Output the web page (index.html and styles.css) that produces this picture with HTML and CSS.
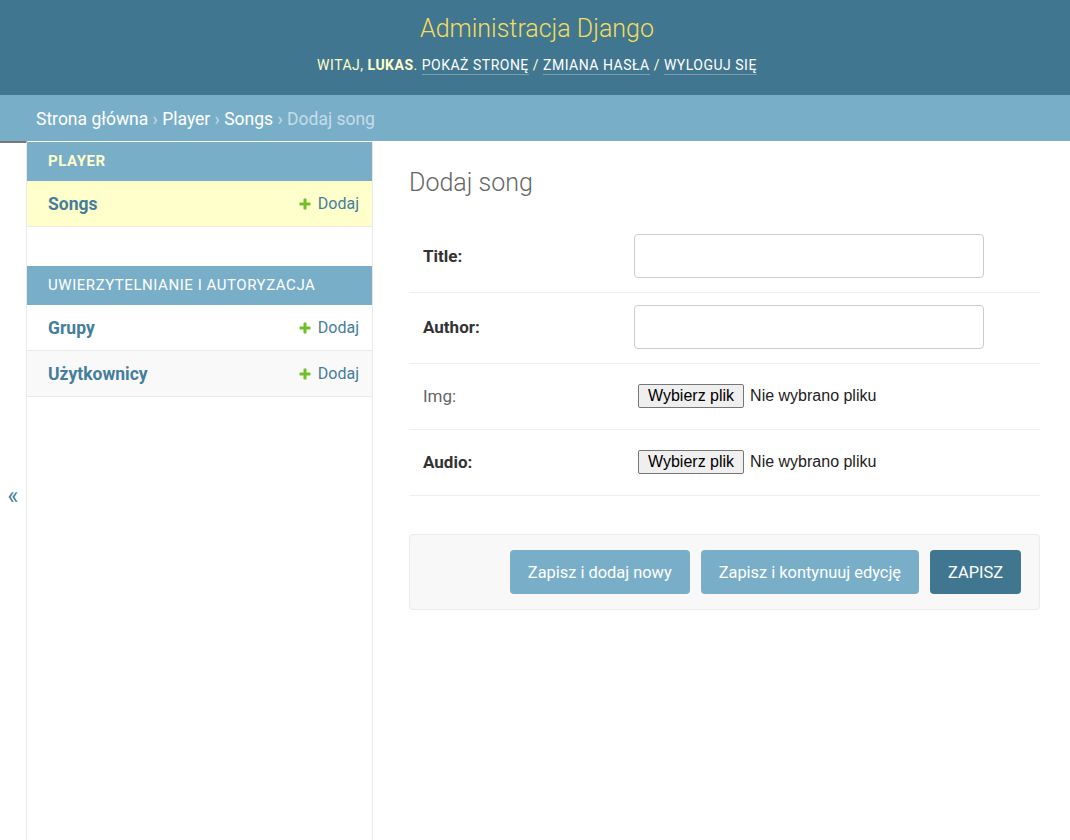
FILE: index.html
```html
<!DOCTYPE html>
<html lang="pl">
<head>
<meta charset="utf-8">
<title>Dodaj song | Administracja Django</title>
<link rel="stylesheet" href="styles.css">
</head>
<body>
<header class="header">
  <div class="brand">Administracja Django</div>
  <div class="user-tools">Witaj, <strong>lukas</strong>. <a href="#">Pokaż stronę</a> / <a href="#">Zmiana hasła</a> / <a href="#">Wyloguj się</a></div>
</header>
<nav class="breadcrumbs"><a href="#">Strona główna</a> › <a href="#">Player</a> › <a href="#">Songs</a> › Dodaj song</nav>
<div class="layout">
  <div class="toggle"><span>«</span></div>
  <aside class="sidebar">
    <div class="module">
      <div class="caption current">Player</div>
      <div class="row current-model"><a class="model" href="#">Songs</a><a class="add" href="#"><svg viewBox="0 0 1792 1792" width="14" height="14"><path fill="#70bf2b" d="M1600 796v192q0 40-28 68t-68 28h-416v416q0 40-28 68t-68 28h-192q-40 0-68-28t-28-68v-416h-416q-40 0-68-28t-28-68v-192q0-40 28-68t68-28h416v-416q0-40 28-68t68-28h192q40 0 68 28t28 68v416h416q40 0 68 28t28 68z"/></svg>Dodaj</a></div>
    </div>
    <div class="module">
      <div class="caption">Uwierzytelnianie i autoryzacja</div>
      <div class="row"><a class="model" href="#">Grupy</a><a class="add" href="#"><svg viewBox="0 0 1792 1792" width="14" height="14"><path fill="#70bf2b" d="M1600 796v192q0 40-28 68t-68 28h-416v416q0 40-28 68t-68 28h-192q-40 0-68-28t-28-68v-416h-416q-40 0-68-28t-28-68v-192q0-40 28-68t68-28h416v-416q0-40 28-68t68-28h192q40 0 68 28t28 68v416h416q40 0 68 28t28 68z"/></svg>Dodaj</a></div>
      <div class="row alt"><a class="model" href="#">Użytkownicy</a><a class="add" href="#"><svg viewBox="0 0 1792 1792" width="14" height="14"><path fill="#70bf2b" d="M1600 796v192q0 40-28 68t-68 28h-416v416q0 40-28 68t-68 28h-192q-40 0-68-28t-28-68v-416h-416q-40 0-68-28t-28-68v-192q0-40 28-68t68-28h416v-416q0-40 28-68t68-28h192q40 0 68 28t28 68v416h416q40 0 68 28t28 68z"/></svg>Dodaj</a></div>
    </div>
  </aside>
  <main class="content">
    <h1>Dodaj song</h1>
    <form class="form">
      <div class="form-row">
        <label class="required">Title:</label>
        <input class="text" type="text">
      </div>
      <div class="form-row">
        <label class="required">Author:</label>
        <input class="text" type="text">
      </div>
      <div class="form-row file-row">
        <label>Img:</label>
        <div class="file"><span class="file-btn">Wybierz plik</span><span class="file-name">Nie wybrano pliku</span></div>
      </div>
      <div class="form-row file-row">
        <label class="required">Audio:</label>
        <div class="file"><span class="file-btn">Wybierz plik</span><span class="file-name">Nie wybrano pliku</span></div>
      </div>
      <div class="submit-row">
        <button type="button" class="btn">Zapisz i dodaj nowy</button>
        <button type="button" class="btn">Zapisz i kontynuuj edycję</button>
        <button type="button" class="btn default">ZAPISZ</button>
      </div>
    </form>
  </main>
</div>
</body>
</html>
```
FILE: styles.css
```css
html, body {
  margin: 0;
  padding: 0;
}
body {
  font-family: Roboto, "Liberation Sans", sans-serif;
  color: #333;
  background: #fff;
}
a {
  text-decoration: none;
}
.header {
  height: 95px;
  box-sizing: border-box;
  background: #417690;
  display: flex;
  flex-direction: column;
  align-items: center;
  padding-top: 14px;
}
.brand {
  font-size: 25px;
  font-weight: 300;
  color: #f5dd5d;
  line-height: 30px;
  margin-left: 4px;
}
.user-tools {
  margin-top: 11px;
  font-size: 14px;
  line-height: 20px;
  letter-spacing: 0.5px;
  text-transform: uppercase;
  color: #ffc;
  margin-left: 4px;
}
.user-tools strong {
  font-weight: 700;
}
.user-tools a {
  color: #fff;
  border-bottom: 1px solid rgba(255,255,255,0.3);
  padding-bottom: 1px;
}
.breadcrumbs {
  height: 46px;
  box-sizing: border-box;
  background: #79aec8;
  color: #c4dce8;
  padding: 3px 36px 0;
  font-size: 17.5px;
  line-height: 43px;
}
.breadcrumbs a {
  color: #fff;
}
.layout {
  display: flex;
  min-height: calc(100vh - 141px);
}
.toggle {
  width: 26px;
  flex: none;
  border-right: 1px solid #eaeaea;
  border-top: 2px solid #777;
  box-sizing: content-box;
  display: flex;
  align-items: center;
  justify-content: center;
  padding-top: 12px;
  color: #447e9b;
  font-size: 23px;
}
.toggle span {
  margin-top: -2px;
}
.sidebar {
  width: 345px;
  flex: none;
  border-right: 1px solid #eaeaea;
  margin-top: 1px;
}
.module {
  margin-bottom: 39px;
}
.caption {
  height: 39px;
  box-sizing: border-box;
  background: #79aec8;
  color: #fff;
  padding-left: 21px;
  font-size: 15px;
  line-height: 39px;
  letter-spacing: 0.55px;
  text-transform: uppercase;
}
.caption.current {
  color: #ffc;
  font-weight: 700;
}
.row {
  height: 46px;
  box-sizing: border-box;
  border-bottom: 1px solid #eaeaea;
  display: flex;
  align-items: center;
  justify-content: space-between;
  padding: 0 13px 0 21px;
}
.row.current-model {
  background: #ffc;
}
.row.alt {
  background: #f9f9f9;
}
.model {
  color: #447e9b;
  font-weight: 700;
  font-size: 17.5px;
}
.add {
  color: #447e9b;
  font-size: 16px;
  display: flex;
  align-items: center;
  gap: 6px;
}
.content {
  flex: 1;
  padding: 27px 30px 40px 36px;
  min-width: 0;
}
.content h1 {
  margin: 0 0 24px;
  font-size: 25px;
  font-weight: 300;
  color: #666;
  line-height: 30px;
}
.form-row {
  display: flex;
  align-items: center;
  padding: 12px 14px 14px;
  border-bottom: 1px solid #eee;
}
.form-row label {
  width: 211px;
  flex: none;
  font-size: 17px;
  color: #666;
}
.form-row label.required {
  color: #333;
  font-weight: 700;
}
.text {
  width: 350px;
  height: 44px;
  box-sizing: border-box;
  border: 1px solid #ccc;
  border-radius: 4px;
  margin: 0;
  padding: 5px 8px;
  font-size: 16px;
  font-family: Roboto, sans-serif;
}
.file {
  height: 39px;
  display: flex;
  align-items: center;
  font-family: "Liberation Sans", Arial, sans-serif;
  font-size: 16px;
  color: #222;
}
.file-btn {
  margin-left: 4px;
  height: 24px;
  box-sizing: border-box;
  padding: 0 9px;
  line-height: 22px;
  background: #efefef;
  border: 1px solid #767676;
  border-radius: 2px;
  color: #000;
  margin-right: 6px;
}
.submit-row {
  margin-top: 38px;
  background: #f8f8f8;
  border: 1px solid #eaeaea;
  border-radius: 4px;
  padding: 15px 18px 15px;
  display: flex;
  justify-content: flex-end;
  gap: 11px;
}
.btn {
  height: 44px;
  border: 0;
  border-radius: 4px;
  background: #79aec8;
  color: #fff;
  font-family: Roboto, sans-serif;
  font-size: 16.4px;
  padding: 0 18px;
  margin: 0;
}
.btn.default {
  background: #417690;
}
```
